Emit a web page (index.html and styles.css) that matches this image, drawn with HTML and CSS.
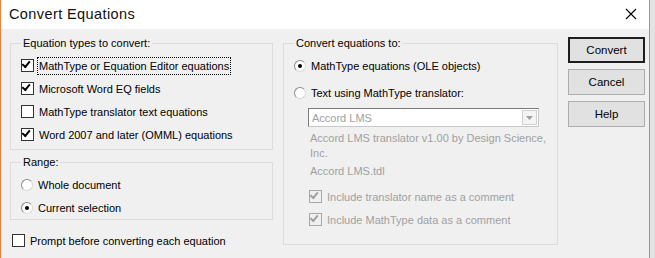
FILE: index.html
```html
<!DOCTYPE html>
<html lang="en">

<head>
    <meta charset="UTF-8">
    <meta name="viewport" content="width=device-width, initial-scale=1.0">
    <title>Convert Equations</title>

    <link rel="stylesheet" href="styles.css">

</head>

<body>

    <div class="window">
        <div class="titlebar">
            <span class="title">Convert Equations</span>
            <svg class="close" width="12" height="12" viewBox="0 0 12 12">
                <path d="M1 1 L11 11 M11 1 L1 11" stroke="#000" stroke-width="1.1" fill="none" />
            </svg>
        </div>

        <div class="dialog-body">
            <div class="left-col">
                <!-- Equation types -->
                <fieldset class="group types">
                    <legend>Equation types to convert:</legend>
                    <div class="row">
                        <span class="check checked"></span>
                        <span class="text focused">MathType or Equation Editor equations</span>
                    </div>
                    <div class="row">
                        <span class="check checked"></span>
                        <span class="text">Microsoft Word EQ fields</span>
                    </div>
                    <div class="row">
                        <span class="check"></span>
                        <span class="text">MathType translator text equations</span>
                    </div>
                    <div class="row">
                        <span class="check checked"></span>
                        <span class="text">Word 2007 and later (OMML) equations</span>
                    </div>
                </fieldset>

                <!-- Range -->
                <fieldset class="group range">
                    <legend>Range:</legend>
                    <div class="row">
                        <span class="radio"></span>
                        <span class="text">Whole document</span>
                    </div>
                    <div class="row">
                        <span class="radio selected"></span>
                        <span class="text">Current selection</span>
                    </div>
                </fieldset>

                <div class="row prompt">
                    <span class="check"></span>
                    <span class="text">Prompt before converting each equation</span>
                </div>
            </div>

            <!-- Target -->
            <fieldset class="group target">
                <legend>Convert equations to:</legend>
                <div class="row">
                    <span class="radio selected"></span>
                    <span class="text">MathType equations (OLE objects)</span>
                </div>
                <div class="row second">
                    <span class="radio"></span>
                    <span class="text">Text using MathType translator:</span>
                </div>

                <div class="combo">
                    <span class="combo-value">Accord LMS</span>
                    <span class="combo-arrow">
                        <svg width="7" height="4" viewBox="0 0 7 4">
                            <path d="M0 0 L7 0 L3.5 4 Z" fill="#a0a0a0" />
                        </svg>
                    </span>
                </div>

                <div class="translator-info">Accord LMS translator v1.00 by Design Science, Inc.</div>
                <div class="translator-file">Accord LMS.tdl</div>

                <div class="row disabled first-disabled">
                    <span class="check checked"></span>
                    <span class="text">Include translator name as a comment</span>
                </div>
                <div class="row disabled">
                    <span class="check checked"></span>
                    <span class="text">Include MathType data as a comment</span>
                </div>
            </fieldset>

            <div class="buttons">
                <button class="default">Convert</button>
                <button>Cancel</button>
                <button>Help</button>
            </div>
        </div>
    </div>

</body>

</html>
```

FILE: styles.css
```css
/* Page */
html {
    background-color: #e3e3e3;
}

body {
    margin: 0;
    font-family: "Liberation Sans", Arial, sans-serif;
    font-size: 11px;
    color: #000;
}

/* Window frame */
.window {
    width: 648px;
    height: 258px;
    background-color: #f0f0f0;
    border-left: 1px solid #e38444;
    border-right: 1px solid #e38444;
}

.titlebar {
    height: 29px;
    background-color: #fff;
    display: flex;
    align-items: center;
    justify-content: space-between;
    padding: 0 12px 0 8px;
    box-sizing: border-box;
}

.titlebar .title {
    font-size: 14.5px;
    letter-spacing: 0.4px;
    margin-top: -1px;
    color: #111;
}

.titlebar .close {
    margin-top: -2px;
}

/* Dialog layout */
.dialog-body {
    display: flex;
    align-items: flex-start;
    padding: 8px 0 0 9px;
}

.left-col {
    width: 263px;
    display: flex;
    flex-direction: column;
}

/* Group boxes */
.group {
    margin: 0;
    border: 1px solid #dcdcdc;
    padding: 4px 0 3px 10px;
    min-width: 0;
}

.group legend {
    padding: 0 2px;
    line-height: 13px;
}

.types {
    height: 104px;
    box-sizing: content-box;
}

.range {
    margin-top: 6px;
    padding-bottom: 0;
}

/* Rows */
.row {
    display: flex;
    align-items: center;
    height: 23px;
}

.row .text {
    margin-left: 5px;
    white-space: nowrap;
}

.row .text.focused {
    outline: 1px dotted #000;
    outline-offset: 1px;
    padding: 1px 0;
}

.prompt {
    margin-top: 9px;
    margin-left: 2px;
}

/* Checkbox */
.check {
    width: 13px;
    height: 13px;
    box-sizing: border-box;
    border: 1px solid #333;
    background-color: #fff;
    flex: none;
    position: relative;
}

.check.checked::after {
    content: "";
    position: absolute;
    left: 2px;
    top: 0px;
    width: 3px;
    height: 6px;
    border-right: 2px solid #000;
    border-bottom: 2px solid #000;
    transform: rotate(40deg);
    transform-origin: 60% 40%;
}

/* Radio */
.radio {
    width: 12px;
    height: 12px;
    box-sizing: border-box;
    border-radius: 50%;
    border: 1px solid #8b8b8b;
    border-right-color: #d8d8d8;
    border-bottom-color: #d8d8d8;
    background-color: #fff;
    flex: none;
    display: flex;
    align-items: center;
    justify-content: center;
}

.radio.selected::after {
    content: "";
    width: 4px;
    height: 4px;
    border-radius: 50%;
    background-color: #000;
}

/* Target group */
.target {
    width: 263px;
    height: 199px;
    margin-left: 10px;
    padding-left: 10px;
    box-sizing: content-box;
}

.target .row.second {
    margin-top: 4px;
}

.combo {
    margin: 4px 0 0 14px;
    width: 231px;
    height: 19px;
    box-sizing: border-box;
    border: 1px solid #7a7a7a;
    border-right-color: #c8c8c8;
    border-bottom-color: #c8c8c8;
    background-color: #fff;
    display: flex;
    align-items: center;
    justify-content: space-between;
    padding: 0 1px 0 3px;
}

.combo-value {
    color: #a0a0a0;
}

.combo-arrow {
    width: 15px;
    height: 15px;
    box-sizing: border-box;
    border: 1px solid #d0d0d0;
    background-color: #f4f4f4;
    display: flex;
    align-items: center;
    justify-content: center;
}

.translator-info {
    margin: 4px 0 0 16px;
    width: 236px;
    line-height: 15px;
    color: #a0a0a0;
}

.translator-file {
    margin: 3px 0 0 16px;
    line-height: 15px;
    color: #a0a0a0;
}

.row.disabled {
    margin-left: 15px;
}

.row.disabled.first-disabled {
    margin-top: 6px;
}

.row.disabled .text {
    color: #a0a0a0;
}

.row.disabled .check {
    border-color: #a8a8a8;
    background-color: #f0f0f0;
}

.row.disabled .check.checked::after {
    border-color: #a0a0a0;
}

/* Buttons */
.buttons {
    display: flex;
    flex-direction: column;
    gap: 6px;
    margin-left: 10px;
}

.buttons button {
    width: 77px;
    height: 26px;
    font-family: "Liberation Sans", Arial, sans-serif;
    font-size: 11.5px;
    background-color: #e1e1e1;
    border: 1px solid #adadad;
    padding: 0;
    color: #000;
}

.buttons button.default {
    border: 2px solid #1e1e1e;
}
```
